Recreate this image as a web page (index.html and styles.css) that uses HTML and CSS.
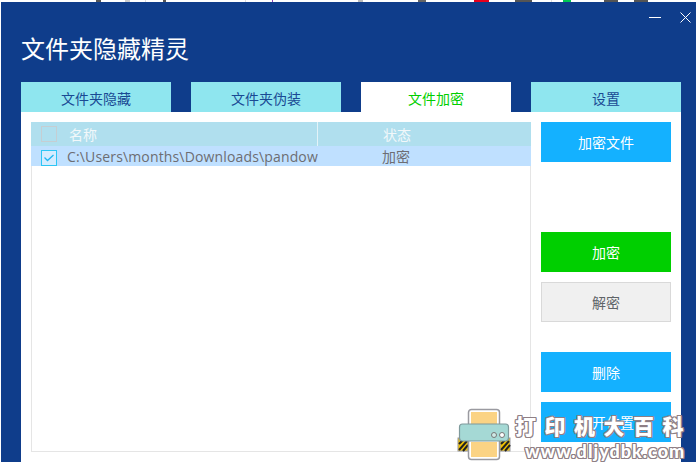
FILE: index.html
```html
<!DOCTYPE html>
<html lang="zh-CN">
<head>
<meta charset="utf-8">
<title>文件夹隐藏精灵</title>
<link rel="stylesheet" href="styles.css">
</head>
<body>
<div class="strip">
  <i class="mark m1"></i><i class="mark m2"></i><i class="mark m3"></i><i class="mark m4"></i><i class="mark m5"></i><i class="mark m6"></i><i class="mark m7"></i><i class="mark m8"></i><i class="mark m9"></i><i class="mark m10"></i><i class="mark m11"></i><i class="mark m12"></i><i class="mark m13"></i><i class="mark m14"></i>
</div>
<div class="window">
  <header class="head">
    <div class="controls">
      <svg class="ctl-min" width="12" height="1" viewBox="0 0 12 1"><rect width="12" height="1" fill="#fff"/></svg>
      <svg class="ctl-close" width="11" height="11" viewBox="0 0 11 11"><path d="M.5.5l10 10M10.5.5l-10 10" stroke="#fff" fill="none"/></svg>
    </div>
    <h1 class="title">文件夹隐藏精灵</h1>
  </header>
  <nav class="tabs">
    <div class="tab">文件夹隐藏</div>
    <div class="tab">文件夹伪装</div>
    <div class="tab tab-active">文件加密</div>
    <div class="tab">设置</div>
  </nav>
  <section class="panel">
    <div class="table">
      <div class="row row-head">
        <div class="cell-check"><span class="check check-off"></span></div>
        <div class="cell-name cell-name-head">名称</div>
        <div class="cell-state">状态</div>
      </div>
      <div class="row row-item">
        <div class="cell-check"><span class="check check-on"><svg width="10" height="8" viewBox="0 0 10 8"><path d="M.5 3.500l3 3L9.500 1" stroke="#1fb6f2" stroke-width="1.300" fill="none"/></svg></span></div>
        <div class="cell-name cell-path">C:\Users\months\Downloads\pandow</div>
        <div class="cell-state cell-state-item">加密</div>
      </div>
    </div>
    <div class="side">
      <button class="btn btn-blue">加密文件</button>
      <button class="btn btn-green gap-lg">加密</button>
      <button class="btn btn-gray gap-sm">解密</button>
      <button class="btn btn-blue gap-md">删除</button>
      <button class="btn btn-blue gap-sm">打开位置</button>
    </div>
  </section>
</div>
<div class="watermark">
  <svg class="wm-icon" width="56" height="56" viewBox="0 0 56 56">
    <rect x="2" y="32" width="10" height="13" fill="#f2c200" stroke="#9a9aa0"/>
    <rect x="44" y="32" width="10" height="13" fill="#f2c200" stroke="#9a9aa0"/>
    <path d="M3 44l8-9M3 38l5-5M7 45l5-6M45 44l8-9M45 38l5-5M49 45l5-6" stroke="#222" stroke-width="2"/>
    <rect x="12.500" y="3.500" width="31" height="50" rx="3" fill="#fff" stroke="#9a9aa0" stroke-width="1.500"/>
    <rect x="15" y="6" width="26" height="12" fill="#fbd384"/>
    <rect x="3.500" y="18" width="49" height="17" rx="3" fill="#a5d9d5" stroke="#7f9a9c" stroke-width="1.200"/>
    <circle cx="38" cy="29" r="2.500" fill="#cfe9e6" stroke="#777"/>
    <circle cx="46" cy="29" r="2.500" fill="#fff" stroke="#777"/>
    <rect x="15" y="36" width="26" height="15" fill="#fbd384"/>
  </svg>
  <div class="wm-text">
    <div class="wm-cn">打印机大百科</div>
    <div class="wm-url">www.dljydbk.com</div>
  </div>
</div>
</body>
</html>
```
FILE: styles.css
```css
* { box-sizing: border-box; }
html, body { margin: 0; padding: 0; }
body {
  width: 696px;
  height: 462px;
  overflow: hidden;
  position: relative;
  background: #fff;
  font-family: "Open Sans", "Noto Sans CJK SC", sans-serif;
}
.strip { display: flex; height: 2px; }
.mark { display: block; height: 2px; flex: none; }
.m1 { margin-left: 96px; width: 5px; background: #555; }
.m2 { margin-left: 24px; width: 5px; background: #ccc; }
.m3 { margin-left: 15px; width: 1px; background: #ddd; }
.m4 { margin-left: 17px; width: 3px; background: #555; }
.m5 { margin-left: 79px; width: 1px; background: #ddd; }
.m6 { margin-left: 26px; width: 1px; background: #8a3fb5; }
.m7 { margin-left: 85px; width: 5px; background: #bbb; }
.m8 { margin-left: 55px; width: 8px; background: #666; }
.m9 { margin-left: 48px; width: 15px; background: #e8001c; }
.m10 { margin-left: 26px; width: 17px; background: #555; }
.m11 { margin-left: 19px; width: 1px; background: #ddd; }
.m12 { margin-left: 11px; width: 8px; background: #00c853; }
.m13 { margin-left: 33px; width: 14px; background: #555; }
.m14 { margin-left: 16px; width: 14px; background: #555; }

.window {
  margin-left: 1px;
  height: 460px;
  background: #0f3d8b;
  padding: 0 15px 0 20px;
  display: flex;
  flex-direction: column;
}
.head { height: 80px; flex: none; }
.controls {
  display: flex;
  justify-content: flex-end;
  align-items: flex-start;
  height: 32px;
  margin-right: -15px;
  padding: 10px 5px 0 0;
  gap: 19px;
}
.ctl-min { margin-top: 5px; }
.title {
  margin: 0;
  font-size: 24px;
  font-weight: 400;
  line-height: 30px;
  color: #fff;
}
.tabs { display: flex; gap: 20px; flex: none; }
.tab {
  width: 150px;
  height: 30px;
  background: #8fe6ef;
  color: #1a4a94;
  font-size: 14px;
  line-height: 33px;
  text-align: center;
}
.tab-active { background: #fff; color: #00cf00; }
.panel {
  flex: 1;
  background: #fff;
  padding: 10px;
  display: flex;
  align-items: flex-start;
  gap: 10px;
}
.table {
  width: 500px;
  height: 330px;
  border-left: 1px solid #e5e5e5;
  border-right: 1px solid #e5e5e5;
  border-bottom: 1px solid #e5e5e5;
  flex: none;
}
.row { display: flex; margin: 0 -1px; align-items: center; font-size: 14px; }
.row-head { height: 24px; background: #b0dfee; color: #f2f8fa; }
.row-item { height: 20px; background: #bfe0ff; color: #6d6d72; }
.cell-check { width: 36px; flex: none; padding-left: 10px; display: flex; }
.check { width: 16px; height: 16px; display: flex; align-items: center; justify-content: center; }
.check-off { border: 1px solid #c5ced3; }
.check-on { border: 1px solid #2cc6f5; background: #d4ecff; margin-top: 4px; }
.cell-name {
  width: 251px;
  flex: none;
  white-space: nowrap;
  overflow: hidden;
}
.cell-path { letter-spacing: .15px; }
.cell-name-head {
  padding-left: 2px;
  height: 24px;
  line-height: 25px;
  border-right: 1px solid #e3f3f8;
}
.cell-state { padding-left: 65px; }
.cell-state-item { padding-left: 64px; }
.side { width: 130px; flex: none; display: flex; flex-direction: column; }
.btn {
  width: 130px;
  height: 40px;
  border: 0;
  padding: 0;
  font: inherit;
  font-size: 14px;
  color: #fff;
}
.btn-blue { background: #14b1ff; }
.btn-green { background: #00cf00; }
.btn-gray { background: #f0f0f0; color: #5f6468; border: 1px solid #d9d9d9; }
.gap-sm { margin-top: 10px; }
.gap-md { margin-top: 30px; }
.gap-lg { margin-top: 70px; }

.watermark {
  position: absolute;
  left: 456px;
  top: 406px;
  display: flex;
}
.wm-icon { flex: none; }
.wm-text {
  margin-left: 3px;
  white-space: nowrap;
  color: #fff;
  text-shadow:
    1px 0 0 #8f7f85, -1px 0 0 #8f7f85, 0 1px 0 #8f7f85, 0 -1px 0 #8f7f85,
    1px 1px 0 #8f7f85, -1px 1px 0 #8f7f85, 1px -1px 0 #8f7f85, -1px -1px 0 #8f7f85;
}
.wm-cn {
  font-family: "Noto Sans CJK SC", sans-serif;
  font-weight: 900;
  font-size: 21px;
  line-height: 26px;
  margin-top: 6px;
  letter-spacing: 8.500px;
}
.wm-url {
  font-family: "Lato", sans-serif;
  font-weight: 900;
  font-size: 18px;
  line-height: 20px;
  margin: 3px 0 0 10px;
  letter-spacing: 1px;
}
```
